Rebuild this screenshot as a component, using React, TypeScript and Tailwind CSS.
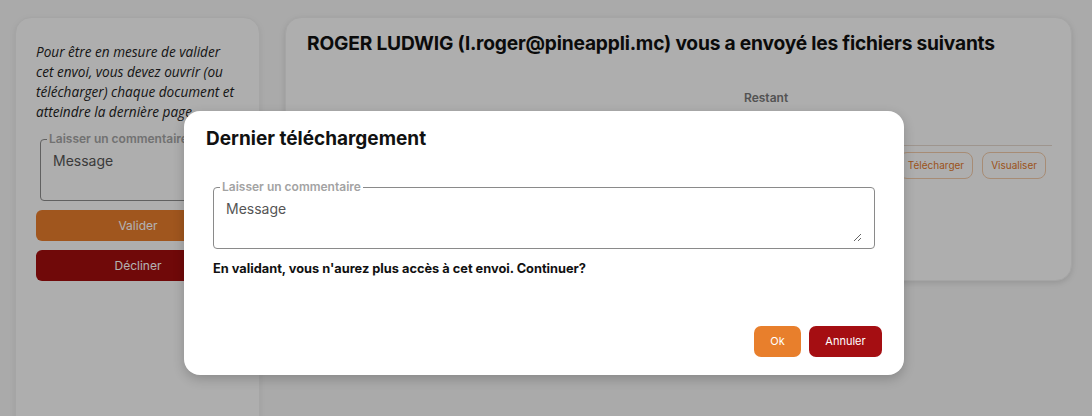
import React from 'react';

const sans = { fontFamily: 'Inter, "Noto Sans", sans-serif' };

const Fieldset: React.FC<{ className?: string; rows?: string }> = ({ className = '', rows = 'h-[40px]' }) => (
  <fieldset className={`border border-[#8a8a8a] rounded-[4px] px-[12px] pt-[6px] pb-[6px] ${className}`}>
    <legend className="text-[12px] font-semibold text-[#a3a3a3] px-[2px] -ml-[6px] leading-[14px]">Laisser un commentaire</legend>
    <textarea
      placeholder="Message"
      className={`w-full ${rows} bg-transparent outline-none text-[14px] text-[#222] placeholder:text-[#555] resize-y leading-[18px] block`}
      style={sans}
    />
  </fieldset>
);

export default function App() {
  return (
    <div className="relative w-[1092px] h-[416px] overflow-hidden bg-[#f4f4f4]" style={sans}>
      {/* Page */}
      <div className="flex items-start gap-[25px] pl-[15px] pt-[17px]">
        {/* Left card */}
        <div className="w-[245px] h-[440px] shrink-0 bg-[#f9f9f9] border border-[#ececec] rounded-[16px] shadow-[0_2px_6px_rgba(0,0,0,0.08)] pl-[20px] pr-[19px] pt-[24px]">
          <p className="italic text-[13.6px] leading-[20px] text-[#222] pr-[6px]" style={{ fontFamily: '"Open Sans", sans-serif' }}>
            Pour être en mesure de valider cet envoi, vous devez ouvrir (ou télécharger) chaque document et atteindre la dernière page.
          </p>
          <Fieldset className="mt-[10px] ml-[4px]" rows="h-[42px]" />
          <button className="mt-[9px] w-full h-[31px] rounded-[6px] bg-[#e67c2c] text-white text-[12px]">Valider</button>
          <button className="mt-[9px] w-full h-[31px] rounded-[6px] bg-[#a10e0e] text-white text-[12px]">Décliner</button>
        </div>

        {/* Right card */}
        <div className="w-[787px] h-[264px] shrink-0 bg-[#f9f9f9] border border-[#ececec] rounded-[16px] shadow-[0_2px_6px_rgba(0,0,0,0.12)] pl-[21px] pr-[19px] pt-[13px]">
          <h1 className="text-[19.2px] font-bold leading-[24px] text-[#111] tracking-[-0.2px]">
            ROGER LUDWIG (l.roger@pineappli.mc) vous a envoyé les fichiers suivants
          </h1>
          <div className="mt-[35px] flex pl-[437px]">
            <span className="text-[12px] font-semibold text-[#777] leading-[16px]">Restant</span>
          </div>
          <div className="mt-[39px] border-t border-[#e2d6cc]" />
          <div className="mt-[6px] flex justify-end gap-[9px] pr-[6px]">
            <button className="h-[27px] px-[8px] rounded-[8px] border border-[#f0c9a8] text-[#e0772a] text-[10px]">Télécharger</button>
            <button className="h-[27px] px-[8px] rounded-[8px] border border-[#f0c9a8] text-[#e0772a] text-[10px]">Visualiser</button>
          </div>
        </div>
      </div>

      {/* Overlay */}
      <div className="absolute inset-0 bg-black/30 flex justify-center pt-[111px] pr-[4px]">
        <div className="w-[720px] h-[264px] bg-white rounded-[16px] shadow-[0_4px_12px_rgba(0,0,0,0.2)] pl-[22px] pr-[22px] pt-[15px] flex flex-col">
          <h2 className="text-[19px] font-bold leading-[26px] text-[#111]">Dernier téléchargement</h2>
          <Fieldset className="mt-[28px] ml-[7px] mr-[7px]" rows="h-[42px]" />
          <p className="mt-[10px] ml-[7px] text-[12.8px] font-bold text-[#111]">
            En validant, vous n'aurez plus accès à cet envoi. Continuer?
          </p>
          <div className="mt-auto mb-[18px] flex justify-end gap-[8px]">
            <button className="h-[31px] w-[47px] rounded-[7px] bg-[#e87f2c] text-white text-[11px]">Ok</button>
            <button className="h-[31px] w-[73px] rounded-[7px] bg-[#a50e12] text-white text-[11px]">Annuler</button>
          </div>
        </div>
      </div>
    </div>
  );
}
